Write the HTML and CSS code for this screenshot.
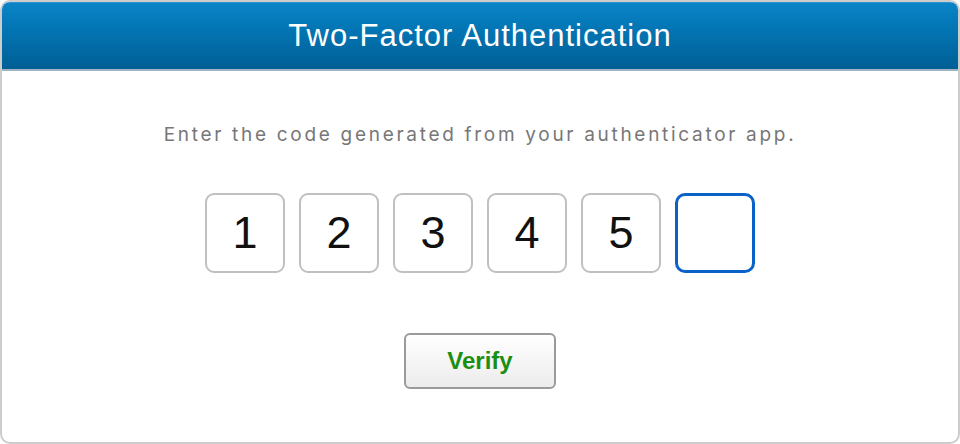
FILE: index.html
```html
<!DOCTYPE html>
<html>
<head>
<meta charset="utf-8">
<link rel="stylesheet" href="styles.css">
</head>
<body>
<div class="panel">
  <div class="header">Two-Factor Authentication</div>
  <div class="content">
    <p class="hint">Enter the code generated from your authenticator app.</p>
    <div class="code">
      <div class="digit">1</div>
      <div class="digit">2</div>
      <div class="digit">3</div>
      <div class="digit">4</div>
      <div class="digit">5</div>
      <div class="digit active"></div>
    </div>
    <button class="verify">Verify</button>
  </div>
</div>
</body>
</html>
```
FILE: styles.css
```css
html, body { margin: 0; padding: 0; background: #fff; }
body { font-family: Inter, "Noto Sans", sans-serif; }
.panel {
  width: 960px;
  height: 444px;
  box-sizing: border-box;
  border: 2px solid #cdcdcd;
  border-radius: 10px;
  overflow: hidden;
  display: flex;
  flex-direction: column;
}
.header {
  height: 66px;
  flex: none;
  background: linear-gradient(#0a84c6 0%, #0479b9 30%, #005f95 100%);
  border-top: 1px solid #2b93d0;
  border-bottom: 2px solid #9fb3c4;
  color: #fff;
  font-family: "Liberation Sans", Arial, sans-serif;
  font-size: 31px;
  letter-spacing: 1px;
  display: flex;
  align-items: center;
  justify-content: center;
}
.content {
  display: flex;
  flex-direction: column;
  align-items: center;
}
.hint {
  margin: 52px 0 0;
  font-size: 19px;
  letter-spacing: 2.7px;
  color: #777;
  line-height: 24px;
}
.code {
  display: flex;
  gap: 14px;
  margin-top: 46px;
}
.digit {
  width: 80px;
  height: 80px;
  box-sizing: border-box;
  border: 2px solid #c0c0c0;
  border-radius: 9px;
  display: flex;
  align-items: center;
  justify-content: center;
  font-family: "Liberation Sans", Arial, sans-serif;
  font-size: 45px;
  color: #111;
}
.digit.active {
  border: 3px solid #0a62c9;
  border-radius: 10px;
}
.verify {
  margin-top: 60px;
  width: 152px;
  height: 56px;
  border: 2px solid #9a9a9a;
  border-radius: 6px;
  background: linear-gradient(#ffffff, #ececec);
  color: #1b8f12;
  font-family: "Liberation Sans", Arial, sans-serif;
  font-weight: 700;
  font-size: 24px;
  padding: 0;
}
```
